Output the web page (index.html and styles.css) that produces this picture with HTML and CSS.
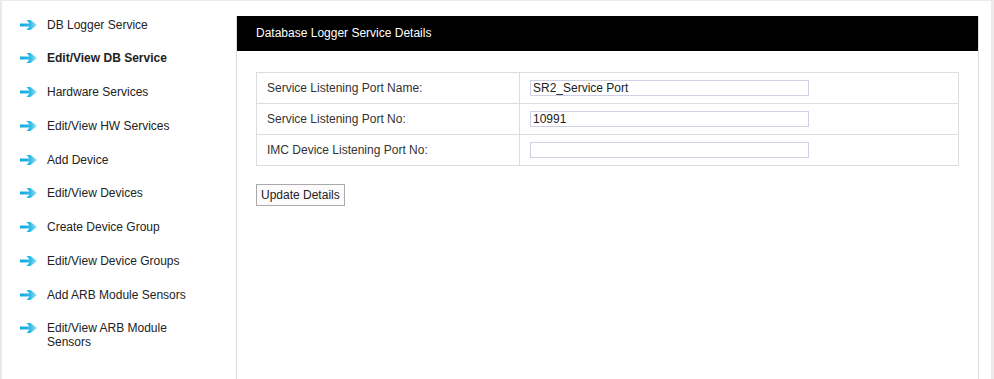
FILE: index.html
```html
<!DOCTYPE html>
<html lang="en">

<head>
    <meta charset="utf-8">
    <meta name="viewport" content="width=device-width, initial-scale=1.0">
    <title>Database Logger Service</title>
    <link rel="stylesheet" href="styles.css">
</head>

<body>

    <div class="wrapper">

        <!-- side menu -->
        <nav class="sidemenu">
            <a href="#" class="menupunkt"><svg class="pil" viewBox="0 0 18 12"><defs><linearGradient id="g" x1="0" x2="1"><stop offset="0" stop-color="#15a8dc"/><stop offset="0.6" stop-color="#2cbbe8"/><stop offset="1" stop-color="#a6e2f6"/></linearGradient></defs><path d="M0 4.5h9.5l-3-3.5h4l6.5 5-6.5 5h-4l3-3.5H0z" fill="url(#g)"/></svg><span>DB Logger Service</span></a>
            <a href="#" class="menupunkt valgt"><svg class="pil" viewBox="0 0 18 12"><path d="M0 4.5h9.5l-3-3.5h4l6.5 5-6.5 5h-4l3-3.5H0z" fill="url(#g)"/></svg><span>Edit/View DB Service</span></a>
            <a href="#" class="menupunkt"><svg class="pil" viewBox="0 0 18 12"><path d="M0 4.5h9.5l-3-3.5h4l6.5 5-6.5 5h-4l3-3.5H0z" fill="url(#g)"/></svg><span>Hardware Services</span></a>
            <a href="#" class="menupunkt"><svg class="pil" viewBox="0 0 18 12"><path d="M0 4.5h9.5l-3-3.5h4l6.5 5-6.5 5h-4l3-3.5H0z" fill="url(#g)"/></svg><span>Edit/View HW Services</span></a>
            <a href="#" class="menupunkt"><svg class="pil" viewBox="0 0 18 12"><path d="M0 4.5h9.5l-3-3.5h4l6.5 5-6.5 5h-4l3-3.5H0z" fill="url(#g)"/></svg><span>Add Device</span></a>
            <a href="#" class="menupunkt"><svg class="pil" viewBox="0 0 18 12"><path d="M0 4.5h9.5l-3-3.5h4l6.5 5-6.5 5h-4l3-3.5H0z" fill="url(#g)"/></svg><span>Edit/View Devices</span></a>
            <a href="#" class="menupunkt"><svg class="pil" viewBox="0 0 18 12"><path d="M0 4.5h9.5l-3-3.5h4l6.5 5-6.5 5h-4l3-3.5H0z" fill="url(#g)"/></svg><span>Create Device Group</span></a>
            <a href="#" class="menupunkt"><svg class="pil" viewBox="0 0 18 12"><path d="M0 4.5h9.5l-3-3.5h4l6.5 5-6.5 5h-4l3-3.5H0z" fill="url(#g)"/></svg><span>Edit/View Device Groups</span></a>
            <a href="#" class="menupunkt"><svg class="pil" viewBox="0 0 18 12"><path d="M0 4.5h9.5l-3-3.5h4l6.5 5-6.5 5h-4l3-3.5H0z" fill="url(#g)"/></svg><span>Add ARB Module Sensors</span></a>
            <a href="#" class="menupunkt"><svg class="pil" viewBox="0 0 18 12"><path d="M0 4.5h9.5l-3-3.5h4l6.5 5-6.5 5h-4l3-3.5H0z" fill="url(#g)"/></svg><span>Edit/View ARB Module Sensors</span></a>
        </nav>

        <!-- content -->
        <section class="panel">
            <h1 class="panel-titel">Database Logger Service Details</h1>

            <div class="panel-indhold">
                <table class="detaljer">
                    <tr>
                        <td class="label">Service Listening Port Name:</td>
                        <td><input type="text" value="SR2_Service Port"></td>
                    </tr>
                    <tr>
                        <td class="label">Service Listening Port No:</td>
                        <td><input type="text" value="10991"></td>
                    </tr>
                    <tr>
                        <td class="label">IMC Device Listening Port No:</td>
                        <td><input type="text" value=""></td>
                    </tr>
                </table>

                <button class="knap">Update Details</button>
            </div>
        </section>

    </div>

</body>

</html>
```

FILE: styles.css
```css
body {
    margin: 0;
    background-color: #ebe9e9;
    font-family: "Liberation Sans", Arial, sans-serif;
    font-size: 12px;
    color: #222;
    overflow: hidden;
}

.wrapper {
    display: flex;
    align-items: stretch;
    background-color: #fff;
    margin: 1px 3px 0 2px;
    height: calc(100vh - 1px);
}

/********************  side menu  ********************/

.sidemenu {
    width: 234px;
    flex-shrink: 0;
    padding-top: 6.5px;
}

.menupunkt {
    display: flex;
    align-items: flex-start;
    padding: 10px 0 9.78px 18px;
    line-height: 14px;
    color: #222;
    text-decoration: none;
}

.menupunkt span {
    max-width: 160px;
}

.menupunkt .pil {
    width: 18px;
    height: 12px;
    margin: 1px 9px 0 0;
    flex-shrink: 0;
}

.valgt {
    font-weight: bold;
}

/********************  panel  ********************/

.panel {
    flex: 1;
    margin: 15px 12px 0 0;
    border-left: 1px solid #dcdcdc;
    border-right: 1px solid #dcdcdc;
}

.panel-titel {
    margin: 0;
    background-color: #000;
    color: #fff;
    font-size: 12px;
    font-weight: normal;
    height: 35px;
    line-height: 35px;
    padding-left: 19px;
}

.panel-indhold {
    padding: 21px 19px;
}

.detaljer {
    width: 100%;
    border-collapse: collapse;
}

.detaljer td {
    border: 1px solid #dddddd;
    height: 30px;
    padding: 0 10px;
    color: #333;
}

.detaljer .label {
    width: 242px;
}

.detaljer input {
    display: block;
    width: 279px;
    height: 16px;
    box-sizing: border-box;
    border: 1px solid #cfcfe6;
    padding: 0 2px;
    line-height: 14px;
    font-family: "Liberation Sans", Arial, sans-serif;
    font-size: 12px;
    color: #222;
}

.knap {
    margin-top: 18px;
    height: 22px;
    padding: 0 4px;
    background-color: #fdfafc;
    border: 1px solid #aaa;
    font-family: "Liberation Sans", Arial, sans-serif;
    font-size: 12px;
    color: #222;
}
```
